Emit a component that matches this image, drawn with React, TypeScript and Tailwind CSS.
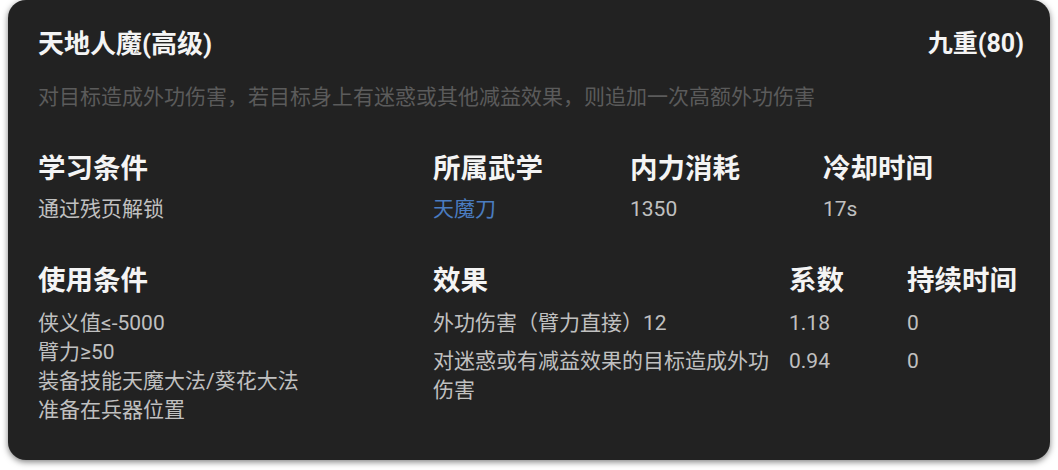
import React from 'react'

const font = { fontFamily: 'Roboto, "Noto Sans CJK SC", sans-serif' }

const learnInfo = [
  { label: '所属武学', value: '天魔刀', link: true },
  { label: '内力消耗', value: '1350' },
  { label: '冷却时间', value: '17s' },
]

const useConditions = ['侠义值≤-5000', '臂力≥50', '装备技能天魔大法/葵花大法', '准备在兵器位置']

const effects = [
  { name: '外功伤害（臂力直接）12', coef: '1.18', duration: '0' },
  { name: '对迷惑或有减益效果的目标造成外功伤害', coef: '0.94', duration: '0' },
]

export default function App() {
  return (
    <div className="w-[1058px] h-[470px] bg-white overflow-hidden" style={font}>
      <div className="ml-[8px] w-[1042px] h-[460px] rounded-[18px] bg-[#222222] shadow-[0_2px_6px_rgba(0,0,0,0.5)] pl-[30px] pr-[26px] pt-[28px]">
        {/* Header */}
        <div className="flex items-center justify-between">
          <h1 className="text-[26px] leading-[32px] font-bold text-[#f4f4f4]">天地人魔(高级)</h1>
          <span className="text-[25px] leading-[32px] font-bold text-[#f4f4f4]">九重(80)</span>
        </div>
        <p className="mt-[23px] text-[21px] leading-[29px] text-[#5b5b5b]">
          对目标造成外功伤害，若目标身上有迷惑或其他减益效果，则追加一次高额外功伤害
        </p>

        {/* Learn conditions */}
        <div className="mt-[40px] grid grid-cols-[395px_197px_193px_1fr]">
          <div>
            <h3 className="text-[27.5px] leading-[34px] font-bold text-[#f4f4f4]">学习条件</h3>
            <p className="mt-[9px] text-[21px] leading-[29px] text-[#c0c0c0]">通过残页解锁</p>
          </div>
          {learnInfo.map(item => (
            <div key={item.label}>
              <h3 className="text-[27.5px] leading-[34px] font-bold text-[#f4f4f4]">{item.label}</h3>
              <p className={`mt-[9px] text-[21px] leading-[29px] ${item.link ? 'text-[#4a7cc0]' : 'text-[#c0c0c0]'}`}>
                {item.value}
              </p>
            </div>
          ))}
        </div>

        {/* Use conditions + effects */}
        <div className="mt-[40px] flex">
          <div className="w-[395px] shrink-0">
            <h3 className="text-[27.5px] leading-[34px] font-bold text-[#f4f4f4]">使用条件</h3>
            <ul className="mt-[11px] text-[21px] leading-[29px] text-[#c0c0c0]">
              {useConditions.map(c => (
                <li key={c}>{c}</li>
              ))}
            </ul>
          </div>
          <div className="grid grid-cols-[356px_118px_1fr] gap-y-[9px] content-start">
            <h3 className="text-[27.5px] leading-[34px] font-bold text-[#f4f4f4] mb-[2px]">效果</h3>
            <h3 className="text-[27.5px] leading-[34px] font-bold text-[#f4f4f4] mb-[2px]">系数</h3>
            <h3 className="text-[27.5px] leading-[34px] font-bold text-[#f4f4f4] mb-[2px]">持续时间</h3>
            {effects.map(e => (
              <React.Fragment key={e.name}>
                <span className="pr-[12px] text-[21px] leading-[29px] text-[#c0c0c0]">{e.name}</span>
                <span className="text-[21px] leading-[29px] text-[#c0c0c0]">{e.coef}</span>
                <span className="text-[21px] leading-[29px] text-[#c0c0c0]">{e.duration}</span>
              </React.Fragment>
            ))}
          </div>
        </div>
      </div>
    </div>
  )
}
